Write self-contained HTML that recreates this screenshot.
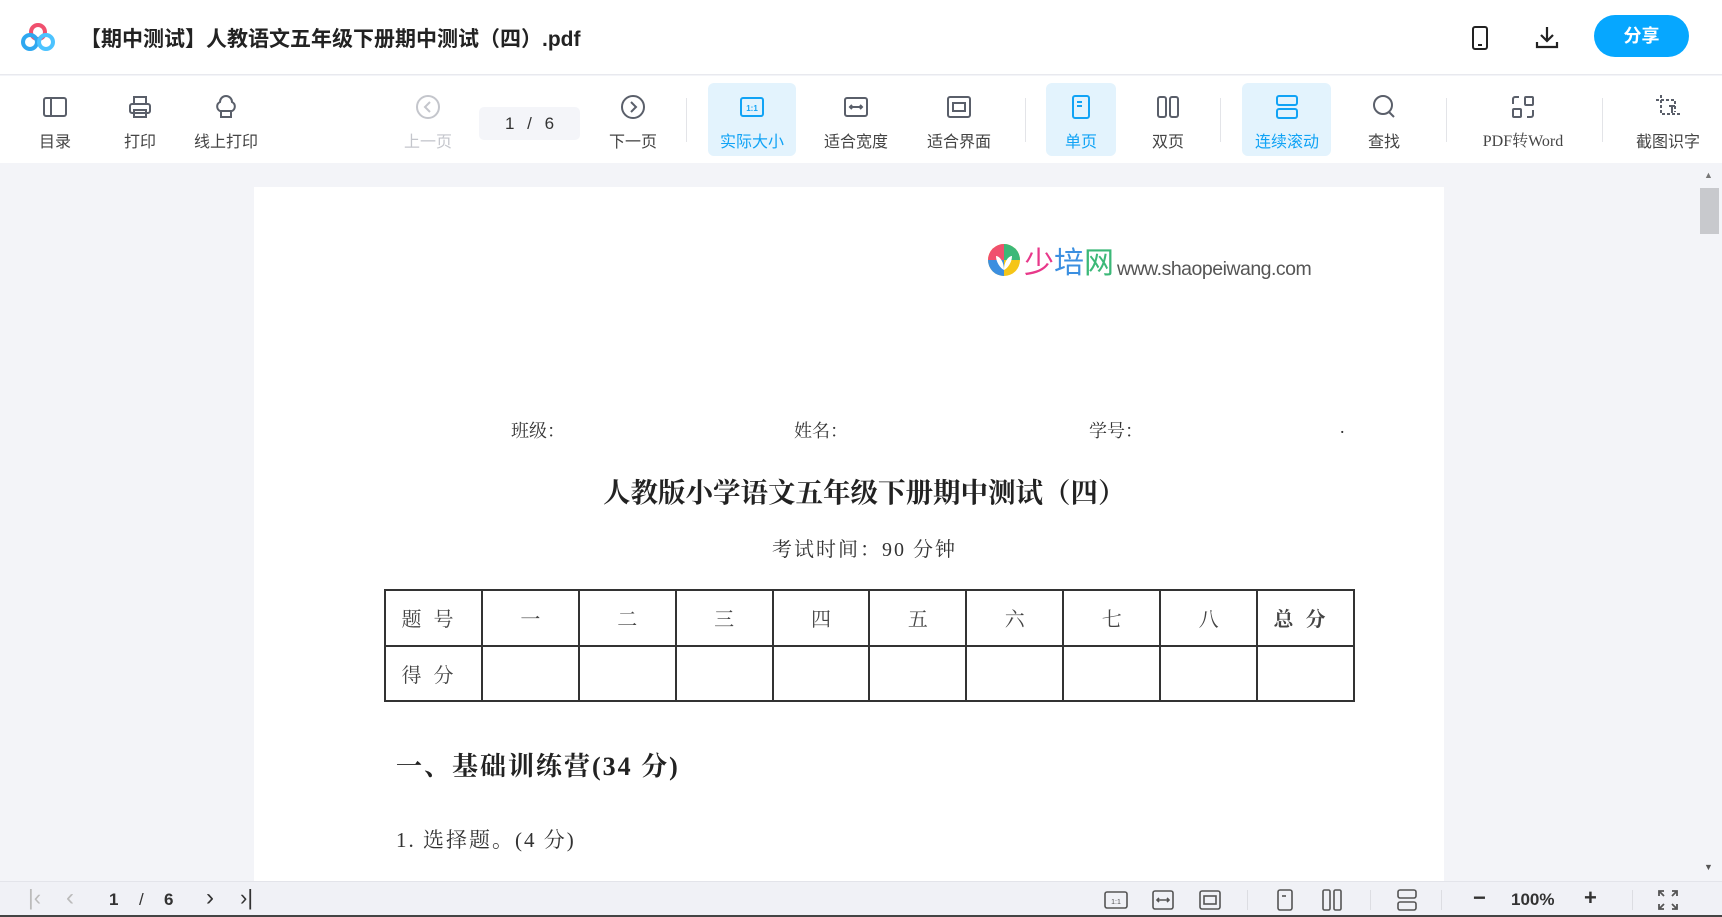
<!DOCTYPE html>
<html><head><meta charset="utf-8"><style>
*{margin:0;padding:0;box-sizing:border-box}
body{width:1722px;height:917px;overflow:hidden;background:#f3f4f8;font-family:"Liberation Sans","Noto Sans CJK SC",sans-serif;position:relative}
.abs{position:absolute}
#hdr{left:0;top:0;width:1722px;height:75px;background:#fff;border-bottom:1px solid #e8e9ee}
#tb{left:0;top:76px;width:1722px;height:87px;background:#fff}
.it{position:absolute;top:0;height:87px;text-align:center;font-size:16px;color:#444;transform:translateX(-50%);white-space:nowrap}
.it svg{position:absolute;left:50%;top:18px;margin-left:-13px}
.it span{position:absolute;left:50%;top:52px;transform:translateX(-50%)}
.hl{position:absolute;top:7px;height:73px;background:#e3f3fd;border-radius:6px}
.blue{color:#11a3f5}
.sep{position:absolute;width:1px;height:44px;background:#e3e4e8;top:22px}
.pg{font-family:"Liberation Serif","Noto Serif CJK SC",serif;color:#333;position:absolute;white-space:nowrap}
table{border-collapse:collapse;position:absolute;left:384px;top:589px;width:971px;height:113px;font-family:"Liberation Serif","Noto Serif CJK SC",serif;font-size:20px;color:#444}
td{border:2px solid #333;text-align:center;width:97px}
#bb{left:0;top:881px;width:1722px;height:35px;background:#f0f1f6;border-top:1px solid #e3e4ea}
.bi{position:absolute;top:8px;color:#333;font-size:17px;font-weight:bold}
.bs{position:absolute;top:8px;width:1px;height:20px;background:#dcdde2}
</style></head><body>
<div id="hdr" class="abs">
 <svg class="abs" style="left:20px;top:22px" width="36" height="30" viewBox="0 0 36 30"><circle cx="18" cy="10" r="7" fill="none" stroke="#f0506e" stroke-width="4"/><circle cx="10" cy="20" r="7" fill="none" stroke="#2fa8f0" stroke-width="4"/><circle cx="26" cy="20" r="7" fill="none" stroke="#4cc3ff" stroke-width="4"/></svg>
 <div class="abs" style="left:80px;top:23px;font-size:21px;font-weight:bold;color:#222">【期中测试】人教语文五年级下册期中测试（四）.pdf</div>
 <svg class="abs" style="left:1469px;top:25px" width="22" height="26" viewBox="0 0 22 26"><rect x="4" y="2" width="14" height="22" rx="2" fill="none" stroke="#222" stroke-width="2"/><line x1="9" y1="20" x2="13" y2="20" stroke="#222" stroke-width="2"/></svg>
 <svg class="abs" style="left:1534px;top:24px" width="26" height="26" viewBox="0 0 26 26"><path d="M13 3v14M7 11l6 6 6-6M3 18v5h20v-5" fill="none" stroke="#222" stroke-width="2.2"/></svg>
 <div class="abs" style="left:1594px;top:15px;width:95px;height:42px;border-radius:21px;background:#06a7ff;color:#fff;font-size:18px;font-weight:bold;text-align:center;line-height:42px">分享</div>
</div>
<div id="tb" class="abs">
 <div class="hl" style="left:708px;width:88px"></div>
 <div class="hl" style="left:1046px;width:70px"></div>
 <div class="hl" style="left:1242px;width:89px"></div>
 <div class="it" style="left:55px;width:60px"><svg width="26" height="26" viewBox="0 0 26 26" fill="none" stroke="#5a5f6a" stroke-width="2"><rect x="2" y="4" width="22" height="18" rx="2"/><line x1="9" y1="4" x2="9" y2="22"/></svg><span>目录</span></div>
 <div class="it" style="left:140px;width:60px"><svg width="26" height="26" viewBox="0 0 26 26" fill="none" stroke="#5a5f6a" stroke-width="2"><rect x="7" y="3" width="12" height="7"/><rect x="3" y="10" width="20" height="9" rx="2"/><rect x="7" y="16" width="12" height="7"/></svg><span>打印</span></div>
 <div class="it" style="left:226px;width:80px"><svg width="26" height="26" viewBox="0 0 26 26" fill="none" stroke="#5a5f6a" stroke-width="2"><path d="M7 17a5 5 0 0 1 0-9a6 6 0 0 1 12 0a5 5 0 0 1 0 9z"/><rect x="8" y="17" width="10" height="6"/></svg><span>线上打印</span></div>
 <div class="it" style="left:428px;width:70px;color:#c4c6cc"><svg width="26" height="26" viewBox="0 0 26 26" fill="none" stroke="#c4c6cc" stroke-width="2"><circle cx="13" cy="13" r="11"/><path d="M15 8l-5 5 5 5"/></svg><span>上一页</span></div>
 <div class="abs" style="left:479px;top:31px;width:101px;height:33px;background:#f4f5f9;border-radius:5px;font-size:17px;color:#333;text-align:center;line-height:33px;word-spacing:8px">1 / 6</div>
 <div class="it" style="left:633px;width:70px"><svg width="26" height="26" viewBox="0 0 26 26" fill="none" stroke="#5a5f6a" stroke-width="2"><circle cx="13" cy="13" r="11"/><path d="M11 8l5 5-5 5"/></svg><span>下一页</span></div>
 <div class="sep" style="left:686px"></div>
 <div class="it blue" style="left:752px;width:80px"><svg width="26" height="26" viewBox="0 0 26 26" fill="none" stroke="#11a3f5" stroke-width="2"><rect x="2" y="4" width="22" height="18" rx="2"/><text x="13" y="17" font-size="8" text-anchor="middle" fill="#11a3f5" stroke="none" font-weight="bold">1:1</text></svg><span>实际大小</span></div>
 <div class="it" style="left:856px;width:80px"><svg width="26" height="26" viewBox="0 0 26 26" fill="none" stroke="#5a5f6a" stroke-width="2"><rect x="2" y="4" width="22" height="18" rx="2"/><path d="M7 13h12M9 11l-2 2 2 2M17 11l2 2-2 2"/></svg><span>适合宽度</span></div>
 <div class="it" style="left:959px;width:80px"><svg width="26" height="26" viewBox="0 0 26 26" fill="none" stroke="#5a5f6a" stroke-width="2"><rect x="2" y="3" width="22" height="20" rx="2"/><rect x="7" y="9" width="12" height="8"/></svg><span>适合界面</span></div>
 <div class="sep" style="left:1025px"></div>
 <div class="it blue" style="left:1081px;width:60px"><svg width="26" height="26" viewBox="0 0 26 26" fill="none" stroke="#11a3f5" stroke-width="2"><rect x="5" y="2" width="16" height="22" rx="2"/><path d="M9 8h5M9 12h5"/></svg><span>单页</span></div>
 <div class="it" style="left:1168px;width:60px"><svg width="26" height="26" viewBox="0 0 26 26" fill="none" stroke="#5a5f6a" stroke-width="2"><rect x="3" y="3" width="8" height="20" rx="2"/><rect x="15" y="3" width="8" height="20" rx="2"/></svg><span>双页</span></div>
 <div class="sep" style="left:1220px"></div>
 <div class="it blue" style="left:1287px;width:80px"><svg width="26" height="26" viewBox="0 0 26 26" fill="none" stroke="#11a3f5" stroke-width="2"><rect x="3" y="2" width="20" height="9" rx="2"/><rect x="3" y="15" width="20" height="9" rx="2"/></svg><span>连续滚动</span></div>
 <div class="it" style="left:1384px;width:60px"><svg width="26" height="26" viewBox="0 0 26 26" fill="none" stroke="#5a5f6a" stroke-width="2"><circle cx="12" cy="11" r="9"/><path d="M18 18l5 5"/></svg><span>查找</span></div>
 <div class="sep" style="left:1446px"></div>
 <div class="it" style="left:1523px;width:100px;font-family:'Liberation Serif','Noto Serif CJK SC',serif"><svg width="26" height="26" viewBox="0 0 26 26" fill="none" stroke="#5a5f6a" stroke-width="2"><rect x="15" y="3" width="8" height="8" rx="1"/><rect x="3" y="15" width="8" height="8" rx="1"/><path d="M3 10V5a2 2 0 0 1 2-2h4M23 16v5a2 2 0 0 1-2 2h-4"/></svg><span>PDF转Word</span></div>
 <div class="sep" style="left:1602px"></div>
 <div class="it" style="left:1668px;width:80px"><svg width="26" height="26" viewBox="0 0 26 26" fill="none" stroke="#5a5f6a" stroke-width="2"><path d="M6 1v19h19M1 6h19v12" stroke-dasharray="3 2"/><path d="M14 12h6M17 12v7"/></svg><span>截图识字</span></div>
</div>
<!-- page -->
<div class="abs" style="left:254px;top:187px;width:1190px;height:700px;background:#fff"></div>
<svg class="abs" style="left:984px;top:240px" width="40" height="40" viewBox="0 0 40 40"><circle cx="20" cy="20" r="16" fill="#f5c518"/><path d="M20 4a16 16 0 0 1 16 16H20z" fill="#3cb878"/><path d="M4 20a16 16 0 0 1 16-16v16z" fill="#f0506e"/><path d="M20 36a16 16 0 0 1-16-16h16z" fill="#3b8fe0"/><path d="M12 16c3 0 8 5 8 14c0-9 5-14 8-14c0 6-4 12-8 14c-4-2-8-8-8-14z" fill="#fff"/></svg>
<div class="abs" style="left:1024px;top:242px;font-size:30px;white-space:nowrap;font-family:'Noto Sans CJK SC',sans-serif;line-height:36px"><span style="color:#e8388a">少</span><span style="color:#3b8fe0">培</span><span style="color:#3cb878">网</span></div>
<div class="abs" style="left:1117px;top:258px;font-size:19.5px;color:#555;letter-spacing:-0.5px">www.shaopeiwang.com</div>
<div class="pg" style="left:511px;top:417px;font-size:18px">班级：</div>
<div class="pg" style="left:794px;top:417px;font-size:18px">姓名：</div>
<div class="pg" style="left:1089px;top:417px;font-size:18px">学号：</div>
<div class="pg" style="left:1340px;top:417px;font-size:18px">.</div>
<div class="pg" style="left:603px;top:470px;font-size:27.5px;font-weight:bold;color:#222">人教版小学语文五年级下册期中测试（四）</div>
<div class="pg" style="left:772px;top:533px;font-size:20px;letter-spacing:2px">考试时间：90 分钟</div>
<table><tr><td style="letter-spacing:12px">题号</td><td>一</td><td>二</td><td>三</td><td>四</td><td>五</td><td>六</td><td>七</td><td>八</td><td style="font-weight:bold;letter-spacing:12px">总分</td></tr><tr><td style="letter-spacing:12px">得分</td><td></td><td></td><td></td><td></td><td></td><td></td><td></td><td></td><td></td></tr></table>
<div class="pg" style="left:396px;top:746px;font-size:26px;font-weight:bold;color:#222;letter-spacing:2px">一、基础训练营(34 分)</div>
<div class="pg" style="left:396px;top:824px;font-size:21px;letter-spacing:2px">1. 选择题。(4 分)</div>
<!-- scrollbar -->
<div class="abs" style="left:1697px;top:163px;width:25px;height:718px;background:#f3f4f8"></div>
<div class="abs" style="left:1700px;top:188px;width:19px;height:46px;background:#c8c9cd"></div>
<div class="abs" style="left:1704px;top:170px;font-size:9px;color:#777">▲</div>
<div class="abs" style="left:1704px;top:862px;font-size:9px;color:#555">▼</div>
<!-- bottom bar -->
<div id="bb" class="abs">
 <div class="bi" style="left:28px;color:#bbb;font-weight:normal;font-size:22px;top:3px">|&lsaquo;</div>
 <div class="bi" style="left:66px;color:#bbb;font-weight:normal;font-size:24px;top:2px">&lsaquo;</div>
 <div class="bi" style="left:109px">1</div>
 <div class="bi" style="left:139px;font-weight:normal">/</div>
 <div class="bi" style="left:164px">6</div>
 <div class="bi" style="left:206px;font-weight:normal;font-size:24px;top:2px">&rsaquo;</div>
 <div class="bi" style="left:240px;font-weight:normal;font-size:22px;top:3px">&rsaquo;|</div>
 <svg class="abs" style="left:1104px;top:7px" width="24" height="22" viewBox="0 0 24 22" fill="none" stroke="#555" stroke-width="1.6"><rect x="1" y="3" width="22" height="16" rx="2"/><text x="12" y="15" font-size="7" text-anchor="middle" fill="#555" stroke="none">1:1</text></svg>
 <svg class="abs" style="left:1151px;top:7px" width="24" height="22" viewBox="0 0 24 22" fill="none" stroke="#555" stroke-width="1.6"><rect x="2" y="2" width="20" height="18" rx="2"/><path d="M6 11h12M8 9l-2 2 2 2M16 9l2 2-2 2"/></svg>
 <svg class="abs" style="left:1198px;top:7px" width="24" height="22" viewBox="0 0 24 22" fill="none" stroke="#555" stroke-width="1.6"><rect x="2" y="2" width="20" height="18" rx="2"/><rect x="6" y="7" width="12" height="8"/></svg>
 <div class="bs" style="left:1247px"></div>
 <svg class="abs" style="left:1274px;top:7px" width="22" height="22" viewBox="0 0 22 22" fill="none" stroke="#555" stroke-width="1.6"><rect x="4" y="1" width="14" height="20" rx="2"/><path d="M8 7h4"/></svg>
 <svg class="abs" style="left:1321px;top:7px" width="22" height="22" viewBox="0 0 22 22" fill="none" stroke="#555" stroke-width="1.6"><rect x="2" y="1" width="7" height="20" rx="1.5"/><rect x="13" y="1" width="7" height="20" rx="1.5"/></svg>
 <div class="bs" style="left:1370px"></div>
 <svg class="abs" style="left:1396px;top:7px" width="22" height="22" viewBox="0 0 22 22" fill="none" stroke="#555" stroke-width="1.6"><rect x="2" y="1" width="18" height="8" rx="2"/><rect x="2" y="13" width="18" height="8" rx="2"/></svg>
 <div class="bs" style="left:1441px"></div>
 <div class="bi" style="left:1473px;font-size:22px;top:3px">−</div>
 <div class="bi" style="left:1511px">100%</div>
 <div class="bi" style="left:1584px;font-size:22px;top:3px">+</div>
 <div class="bs" style="left:1632px"></div>
 <svg class="abs" style="left:1657px;top:7px" width="22" height="22" viewBox="0 0 22 22" fill="none" stroke="#555" stroke-width="1.8"><path d="M2 7V2h5M15 2h5v5M20 15v5h-5M7 20H2v-5M2 2l5 5M20 2l-5 5M20 20l-5-5M2 20l5-5"/></svg>
</div>
<div class="abs" style="left:0;top:915px;width:1722px;height:2px;background:#444"></div>
</body></html>
